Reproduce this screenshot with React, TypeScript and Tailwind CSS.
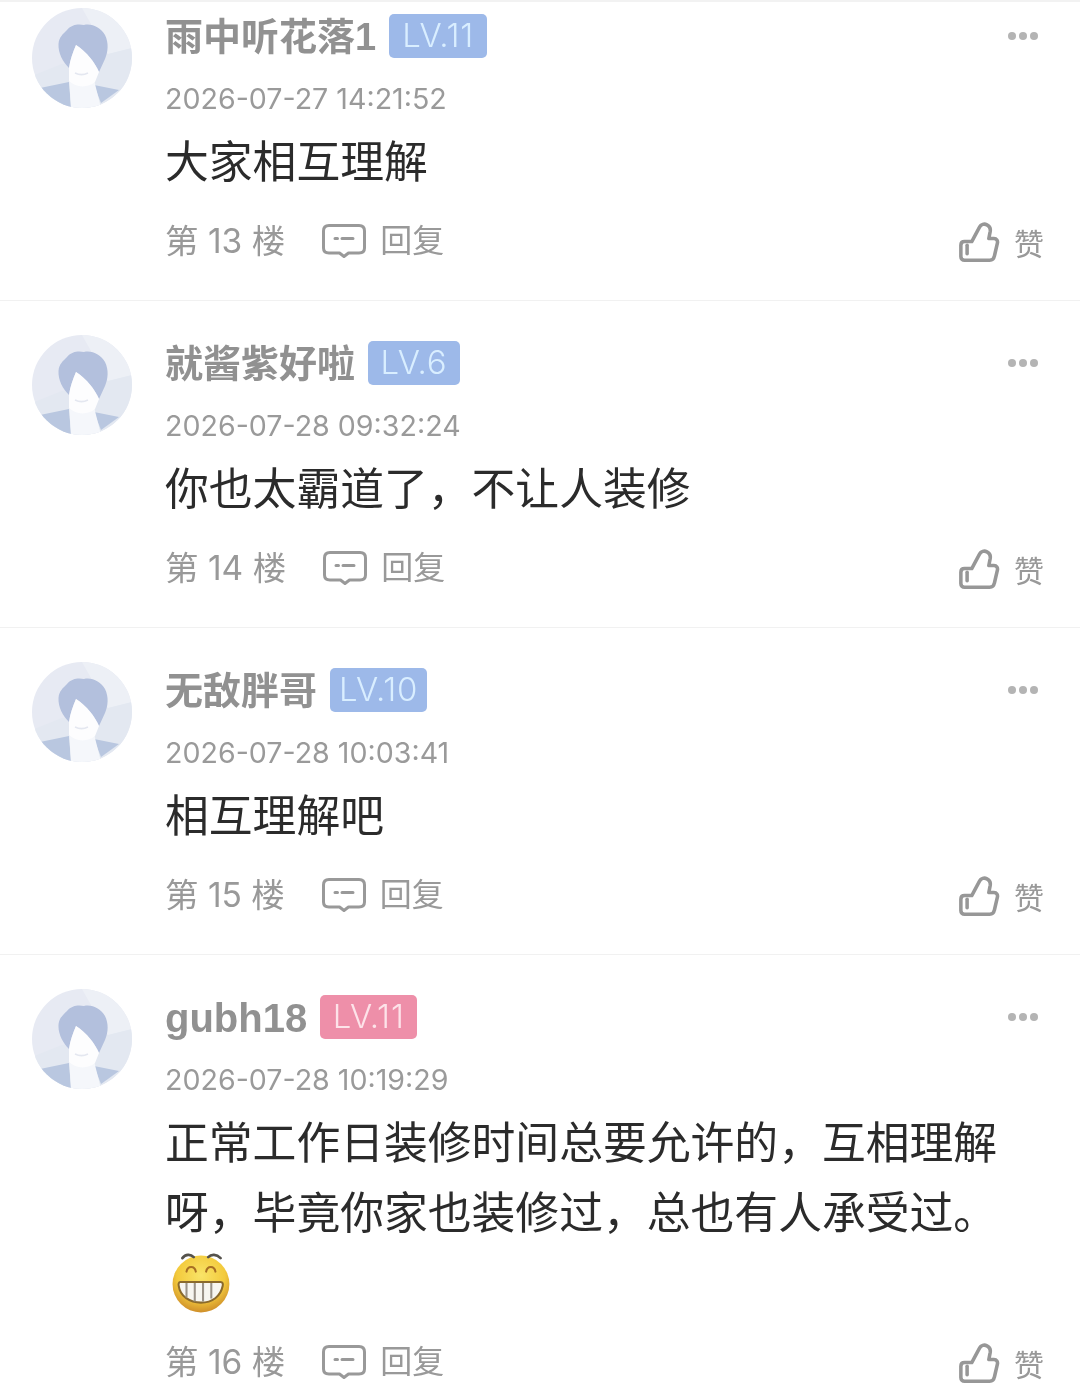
const CJK_FONT = '[font-family:Inter,"Noto_Sans_CJK_SC",sans-serif]';
const NAME_FONT = '[font-family:"Liberation_Sans","Noto_Sans_CJK_SC",sans-serif]';

type Comment = {
    name: string;
    nameSize: string;
    level: string;
    badgeClass: string;
    time: string;
    floor: number;
    lines: string[];
    emoji?: boolean;
};

const COMMENTS: Comment[] = [
    {
        name: "雨中听花落1",
        nameSize: "text-[38px]",
        level: "LV.11",
        badgeClass: "w-[98px] bg-[#9db9e9] text-[#d9eeff]",
        time: "2026-07-27 14:21:52",
        floor: 13,
        lines: ["大家相互理解"],
    },
    {
        name: "就酱紫好啦",
        nameSize: "text-[38px]",
        level: "LV.6",
        badgeClass: "w-[92px] bg-[#9db9e9] text-[#d9eeff]",
        time: "2026-07-28 09:32:24",
        floor: 14,
        lines: ["你也太霸道了，不让人装修"],
    },
    {
        name: "无敌胖哥",
        nameSize: "text-[38px]",
        level: "LV.10",
        badgeClass: "w-[97px] bg-[#9db9e9] text-[#d9eeff]",
        time: "2026-07-28 10:03:41",
        floor: 15,
        lines: ["相互理解吧"],
    },
    {
        name: "gubh18",
        nameSize: "text-[40px]",
        level: "LV.11",
        badgeClass: "w-[97px] bg-[#ee8fa9] text-[#fde3e9]",
        time: "2026-07-28 10:19:29",
        floor: 16,
        lines: ["正常工作日装修时间总要允许的，互相理解", "呀，毕竟你家也装修过，总也有人承受过。"],
        emoji: true,
    },
];

function Avatar() {
    return (
        <svg viewBox="0 0 100 100" className="w-[100px] h-[100px] shrink-0">
            <defs>
                <clipPath id="avatar-clip">
                    <circle cx="50" cy="50" r="50" />
                </clipPath>
            </defs>
            <g clipPath="url(#avatar-clip)">
                <rect width="100" height="100" fill="#e7eaf3" />
                <path d="M50 0 L100 0 L100 40 L76 46 Z" fill="#edf0f6" />
                <path d="M0 68 L30 56 L76 46 L100 40 L100 100 L0 100 Z" fill="#e3e8f1" />
                <path d="M8 80 L37 74 L39 100 L8 100 Z" fill="#b9c7e0" />
                <path d="M62 77 L87 82 L69 95 Z" fill="#b9c7e0" />
                <path d="M37 70 L39 100 L69 100 L62 72 Z" fill="#f5f7fb" />
                <path
                    d="M37 60 C31 54 26 45 26.5 36 C27 29 31 26 35 22 C40 16 47 16 52 17 C60 15 69 20 73 27 C77 35 76 44 73 51 L67 64 C63 55 55 44 44 37 C41 44 38 52 37 60 Z"
                    fill="#b3c0dd"
                />
                <path d="M44 37 C55 44 63 55 67 64 L63 74 C56 80 44 80 37 73 L37 60 C38 52 41 44 44 37 Z" fill="#fdfdfe" />
                <path d="M43 65 C47 67 52 67 56 65" stroke="#e4e7f0" strokeWidth="1.5" fill="none" />
            </g>
        </svg>
    );
}

function CommentIcon() {
    return (
        <svg viewBox="0 0 44 34" className="w-11 h-[34px]" fill="none" stroke="#999999" strokeWidth="3">
            <path
                d="M7 1.5 H37 Q42.5 1.5 42.5 7 V24 Q42.5 29 37 29 H26.5 L22 32.5 L17.5 29 H7 Q1.5 29 1.5 24 V7 Q1.5 1.5 7 1.5 Z"
                strokeLinejoin="round"
            />
            <path d="M13 14.5 H15.5 M20 14.5 H31" strokeLinecap="round" />
        </svg>
    );
}

function ThumbIcon() {
    return (
        <svg viewBox="-2 -2 44 44" className="w-[41px] h-[41px] mt-0.5" fill="none" stroke="#979797" strokeWidth="3.8" strokeLinejoin="round">
            <path d="M4 19 H11.7 L20 3.5 C21.5 0.5 25 -0.5 28 1 C31 2.5 32 5 31.5 8 L30 15.7 H35.5 C38.5 15.7 39.8 18 39.2 20.7 L36 34.5 C35.4 37.5 33.5 39 31 39 H4 C1.5 39 0 37.5 0 35 V23 C0 20.5 1.5 19 4 19 Z" />
            <path d="M6.7 23 V32" strokeLinecap="round" />
        </svg>
    );
}

function GrinEmoji() {
    return (
        <svg viewBox="0 0 60 60" className="w-[62px] h-[62px]">
            <defs>
                <radialGradient id="grin-face" cx="50%" cy="35%" r="65%">
                    <stop offset="0%" stopColor="#f9e468" />
                    <stop offset="65%" stopColor="#f3ca3c" />
                    <stop offset="100%" stopColor="#cf8f2a" />
                </radialGradient>
            </defs>
            <circle cx="29" cy="30" r="27.5" fill="url(#grin-face)" />
            <g fill="none" strokeLinecap="round">
                <path d="M11 5 C14 1 19 1 22 4" stroke="#55524c" strokeWidth="2.6" />
                <path d="M36 4 C39 1 44 1 48 5" stroke="#55524c" strokeWidth="2.6" />
                <path d="M15 18 C16 12 23 12 24 18" stroke="#a86f24" strokeWidth="2" />
                <path d="M34 18 C35 12 42 12 43 18" stroke="#a86f24" strokeWidth="2" />
            </g>
            <path d="M9 28 H48 C50 28 50.5 30 50 32 C48 42 40 48 29 48 C18 48 9 42 7.5 32 C7 30 7.5 28 9 28 Z" fill="#f7f6f0" stroke="#8a6a2c" strokeWidth="2" />
            <path d="M15 29 V43 M23 29 V47 M31 29 V47 M39 29 V44" stroke="#9a9388" strokeWidth="2" />
        </svg>
    );
}

function CommentRow({ comment, first, last }: { comment: Comment; first: boolean; last: boolean }) {
    return (
        <div className={`flex pl-8 pr-9 ${first ? "pt-1.5" : "pt-[34px]"} ${last ? "" : "border-b border-[#f1f1f1]"}`}>
            <Avatar />
            <div className={last ? "flex-1 ml-[33px]" : "flex-1 ml-[33px] pb-[35px]"}>
                <div className="flex items-center h-11 mt-1.5">
                    <span className={`${comment.nameSize} ${NAME_FONT} mt-0.5 leading-[44px] font-bold text-[#919191]`}>{comment.name}</span>
                    <span className={`ml-[13px] h-11 flex items-center justify-center rounded-[5px] text-[33px] tracking-[0.8px] font-light ${comment.badgeClass}`}>
                        {comment.level}
                    </span>
                    <span className="ml-auto mr-1.5 flex gap-[3px]">
                        <span className="w-2 h-2 rounded-full bg-[#b4b4b4]" />
                        <span className="w-2 h-2 rounded-full bg-[#b4b4b4]" />
                        <span className="w-2 h-2 rounded-full bg-[#b4b4b4]" />
                    </span>
                </div>
                <div className="mt-[21px] h-10 text-[28.6px] leading-10 text-[#9a9a9a]">{comment.time}</div>
                <div className="mt-[9px] w-[850px] text-[43.8px] leading-[70px] text-[#2b2b2b]">
                    {comment.lines.map((line) => (
                        <div key={line}>{line}</div>
                    ))}
                    {comment.emoji && (
                        <div className="h-[70px] flex items-center pl-1.5">
                            <GrinEmoji />
                        </div>
                    )}
                </div>
                <div className="mt-[19px] h-12 flex items-center text-[33.5px] text-[#999999]">
                    <span>第 {comment.floor} 楼</span>
                    <span className="ml-[37px] flex items-center">
                        <CommentIcon />
                    </span>
                    <span className="ml-3.5 text-[32px]">回复</span>
                    <span className="ml-auto flex items-center gap-3.5">
                        <ThumbIcon />
                        <span className="text-[30px] mt-1.5">赞</span>
                    </span>
                </div>
            </div>
        </div>
    );
}

export default function App() {
    return (
        <div className={`w-[1080px] h-[1386px] overflow-hidden bg-white border-t-2 border-[#f2f2f2] blur-[0.5px] ${CJK_FONT}`}>
            {COMMENTS.map((comment, index) => (
                <CommentRow
                    key={comment.floor}
                    comment={comment}
                    first={index === 0}
                    last={index === COMMENTS.length - 1}
                />
            ))}
        </div>
    );
}
